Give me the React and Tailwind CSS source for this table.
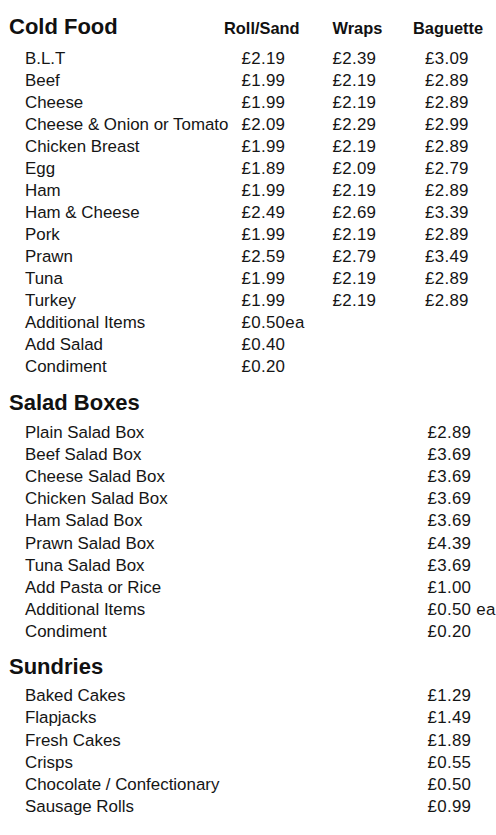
import React from "react";

const cold = [
  ["B.L.T", "£2.19", "£2.39", "£3.09"],
  ["Beef", "£1.99", "£2.19", "£2.89"],
  ["Cheese", "£1.99", "£2.19", "£2.89"],
  ["Cheese & Onion or Tomato", "£2.09", "£2.29", "£2.99"],
  ["Chicken Breast", "£1.99", "£2.19", "£2.89"],
  ["Egg", "£1.89", "£2.09", "£2.79"],
  ["Ham", "£1.99", "£2.19", "£2.89"],
  ["Ham & Cheese", "£2.49", "£2.69", "£3.39"],
  ["Pork", "£1.99", "£2.19", "£2.89"],
  ["Prawn", "£2.59", "£2.79", "£3.49"],
  ["Tuna", "£1.99", "£2.19", "£2.89"],
  ["Turkey", "£1.99", "£2.19", "£2.89"],
  ["Additional Items", "£0.50ea", "", ""],
  ["Add Salad", "£0.40", "", ""],
  ["Condiment", "£0.20", "", ""],
];

const salad = [
  ["Plain Salad Box", "£2.89"],
  ["Beef Salad Box", "£3.69"],
  ["Cheese Salad Box", "£3.69"],
  ["Chicken Salad Box", "£3.69"],
  ["Ham Salad Box", "£3.69"],
  ["Prawn Salad Box", "£4.39"],
  ["Tuna Salad Box", "£3.69"],
  ["Add Pasta or Rice", "£1.00"],
  ["Additional Items", "£0.50 ea"],
  ["Condiment", "£0.20"],
];

const sundries = [
  ["Baked Cakes", "£1.29"],
  ["Flapjacks", "£1.49"],
  ["Fresh Cakes", "£1.89"],
  ["Crisps", "£0.55"],
  ["Chocolate / Confectionary", "£0.50"],
  ["Sausage Rolls", "£0.99"],
];

function Price({ v }) {
  return <span className="tracking-[0.3px]">{v}</span>;
}

function SimpleSection({ title, items, className }) {
  return (
    <section className={className}>
      <h2 className="pl-[9px] text-[22px] font-bold leading-[28px] text-[#111]">{title}</h2>
      <div className="mt-[4.5px]">
        {items.map(([name, price]) => (
          <div
            key={name}
            className="grid grid-cols-[427.5px_1fr] whitespace-nowrap text-[16.9px] leading-[22.2px] text-[#151515]"
          >
            <div className="pl-[25px]">{name}</div>
            <div>
              <Price v={price} />
            </div>
          </div>
        ))}
      </div>
    </section>
  );
}

export default function App() {
  return (
    <div
      className="min-h-[835px] w-[496px] bg-white pt-[13.4px]"
      style={{ fontFamily: '"Liberation Sans", Arial, sans-serif' }}
    >
      <section>
        <div className="grid grid-cols-[224px_108.5px_80.5px_1fr] items-baseline whitespace-nowrap leading-[28px] text-[#111]">
          <h2 className="pl-[9px] text-[22px] font-bold">Cold Food</h2>
          <div className="text-[16.4px] font-bold">Roll/Sand</div>
          <div className="text-[16.4px] font-bold">Wraps</div>
          <div className="text-[16.4px] font-bold">Baguette</div>
        </div>
        <div className="mt-[5.2px]">
          {cold.map(([name, a, b, c]) => (
            <div
              key={name}
              className="grid grid-cols-[241.5px_91px_92.5px_1fr] whitespace-nowrap text-[16.9px] leading-[22px] text-[#151515]"
            >
              <div className="pl-[25px]">{name}</div>
              <div>
                <Price v={a} />
              </div>
              <div>
                <Price v={b} />
              </div>
              <div>
                <Price v={c} />
              </div>
            </div>
          ))}
        </div>
      </section>
      <SimpleSection title="Salad Boxes" items={salad} className="mt-[11.5px]" />
      <SimpleSection title="Sundries" items={sundries} className="mt-[9px]" />
    </div>
  );
}
